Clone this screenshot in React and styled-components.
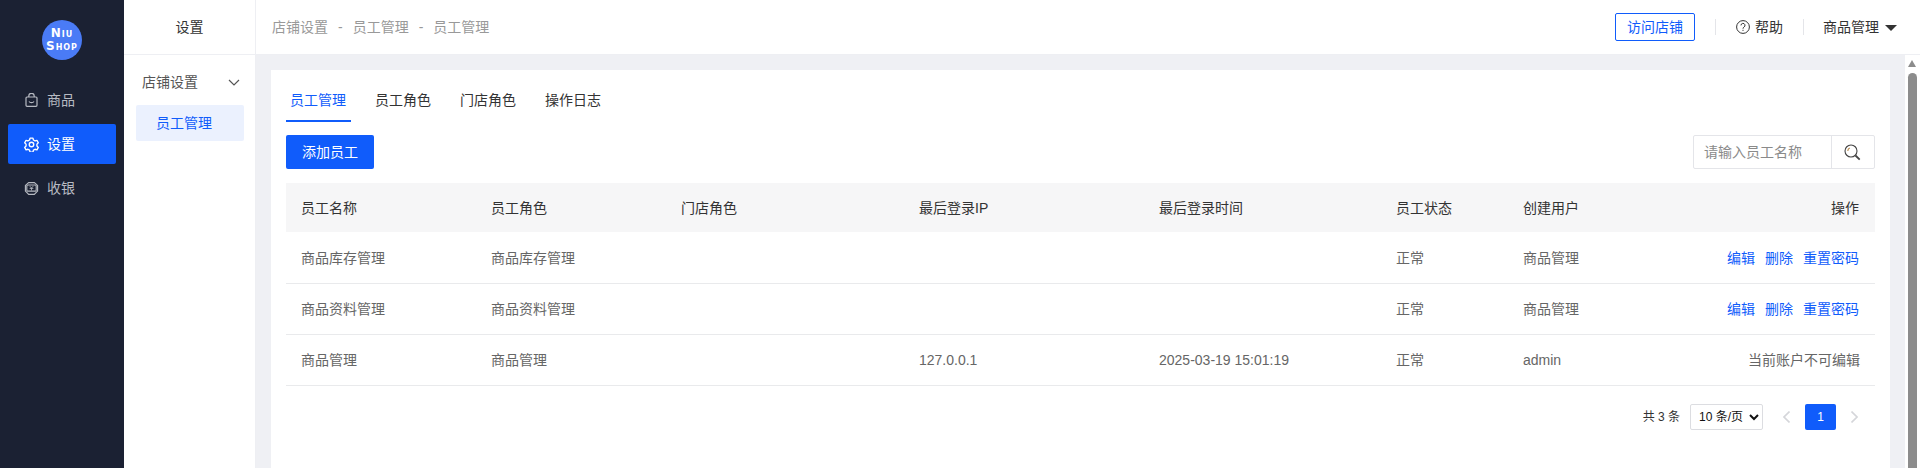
import React from "react";
import styled, { createGlobalStyle } from "styled-components";

const GlobalStyle = createGlobalStyle`
  html, body, #root { margin: 0; padding: 0; height: 100%; overflow: hidden; }
  body {
    font-family: "Liberation Sans", "Noto Sans CJK SC", sans-serif;
    font-size: 14px;
    line-height: 1.5;
    color: #333;
    background: #fff;
  }
  * { box-sizing: border-box; }
`;

const primary = "#105cfb";

const Page = styled.div`
  display: flex;
  height: 100vh;
`;

const Sidebar = styled.aside`
  width: 124px;
  flex: none;
  background: #1b2133;
  padding: 20px 8px 0;
`;

const Logo = styled.div`
  width: 40px;
  height: 40px;
  margin: 0 auto 20px;
  border-radius: 50%;
  background: #4a7bf6;
  color: #fff;
  font-family: "DejaVu Sans", sans-serif;
  font-variant: small-caps;
  font-weight: 700;
  font-size: 12px;
  line-height: 13px;
  letter-spacing: 1px;
  display: flex;
  flex-direction: column;
  align-items: center;
  justify-content: center;
`;

const SideItem = styled.div`
  height: 40px;
  margin-bottom: 4px;
  padding-left: 16px;
  border-radius: 2px;
  display: flex;
  align-items: center;
  gap: 8px;
  color: ${(p) => (p.$active ? "#fff" : "#b7bac2")};
  background: ${(p) => (p.$active ? primary : "transparent")};
`;

const IconSlot = styled.span`
  width: 15px;
  display: flex;
  justify-content: center;
`;

const SubMenu = styled.nav`
  width: 132px;
  flex: none;
  border-right: 1px solid #eeeff3;
  display: flex;
  flex-direction: column;
`;

const SubTitle = styled.div`
  height: 55px;
  border-bottom: 1px solid #eeeff3;
  display: flex;
  align-items: center;
  justify-content: center;
  color: #333;
`;

const SubGroup = styled.div`
  height: 50px;
  padding: 5px 15px 0 18px;
  display: flex;
  align-items: center;
  justify-content: space-between;
  color: #555;
`;

const SubItem = styled.div`
  height: 36px;
  margin: 0 11px 0 12px;
  padding-left: 20px;
  border-radius: 2px;
  display: flex;
  align-items: center;
  color: ${primary};
  background: #ebf1fe;
`;

const Right = styled.div`
  flex: 1;
  min-width: 0;
  display: flex;
  flex-direction: column;
`;

const Header = styled.header`
  height: 55px;
  flex: none;
  padding-left: 16px;
  padding-right: 23px;
  border-bottom: 1px solid #eeeff3;
  display: flex;
  align-items: center;
  justify-content: space-between;
`;

const Crumbs = styled.div`
  display: flex;
  gap: 10px;
  color: #999;
`;

const HeaderTools = styled.div`
  display: flex;
  align-items: center;
`;

const VisitButton = styled.button`
  width: 80px;
  height: 28px;
  padding: 0;
  margin-right: 20px;
  font: inherit;
  color: ${primary};
  background: #fff;
  border: 1px solid ${primary};
  border-radius: 2px;
`;

const ToolDivider = styled.span`
  width: 1px;
  height: 16px;
  background: #e4e5e9;
`;

const HelpLink = styled.div`
  padding: 0 20px;
  display: flex;
  align-items: center;
  gap: 5px;
  color: #333;
`;

const UserMenu = styled.div`
  padding-left: 19px;
  display: flex;
  align-items: center;
  gap: 6px;
  color: #333;
`;

const Caret = styled.span`
  width: 0;
  height: 0;
  border-left: 6px solid transparent;
  border-right: 6px solid transparent;
  border-top: 6px solid #333;
  margin-top: 2px;
`;

const Body = styled.div`
  flex: 1;
  min-height: 0;
  display: flex;
`;

const Main = styled.main`
  flex: 1;
  min-width: 0;
  overflow: hidden;
  background: #eff0f4;
  padding: 15px 15px 0;
`;

// window scrollbar, the browser hides the real one in the shot
const ScrollRail = styled.div`
  width: 15px;
  flex: none;
  padding: 5px 3px 0;
  background: #fff;
  display: flex;
  flex-direction: column;
`;

const ScrollArrow = styled.span`
  width: 0;
  height: 0;
  border-left: 4.5px solid transparent;
  border-right: 4.5px solid transparent;
  border-bottom: 7px solid #8c8c8c;
`;

const ScrollThumb = styled.span`
  flex: 1;
  margin-top: 6px;
  background: #8c8c8c;
  border-radius: 5px 5px 0 0;
`;

const Card = styled.section`
  background: #fff;
  height: 100%;
  padding: 15px;
`;

const Tabs = styled.div`
  display: flex;
  gap: 20px;
  height: 37px;
`;

const Tab = styled.div`
  height: 37px;
  padding: 0 5px 0 4px;
  line-height: 31px;
  color: ${(p) => (p.$active ? primary : "#333")};
  border-bottom: 2px solid ${(p) => (p.$active ? primary : "transparent")};
`;

const Toolbar = styled.div`
  margin-top: 13px;
  display: flex;
  align-items: center;
  justify-content: space-between;
`;

const AddButton = styled.button`
  width: 88px;
  height: 34px;
  padding: 0;
  font: inherit;
  color: #fff;
  background: ${primary};
  border: 0;
  border-radius: 2px;
`;

const SearchBox = styled.div`
  width: 182px;
  height: 34px;
  display: flex;
  border: 1px solid #e4e5e9;
  border-radius: 2px;
`;

const SearchText = styled.div`
  flex: 1;
  padding-left: 10px;
  line-height: 32px;
  color: #8a8a8a;
  border-right: 1px solid #e4e5e9;
`;

const SearchIcon = styled.div`
  width: 42px;
  padding-right: 2px;
  display: flex;
  align-items: center;
  justify-content: center;
`;

const Table = styled.table`
  width: 100%;
  margin-top: 14px;
  border-collapse: collapse;
  table-layout: fixed;
`;

const Th = styled.th`
  height: 49px;
  padding: 1px ${(p) => (p.$right ? "16px" : "15px")} 0 15px;
  font-weight: 400;
  text-align: ${(p) => (p.$right ? "right" : "left")};
  color: #333;
  background: #f6f6f7;
`;

const Td = styled.td`
  height: 51px;
  padding: 2px 15px 0;
  text-align: ${(p) => (p.$right ? "right" : "left")};
  color: #666;
  border-bottom: 1px solid #e9eaec;
`;

const ActionLink = styled.a`
  margin-left: 10px;
  color: ${primary};

  &:last-child {
    margin-right: 1px;
  }
`;

const Pagination = styled.div`
  margin-top: 18px;
  padding-right: 17px;
  display: flex;
  align-items: center;
  justify-content: flex-end;
  font-size: 12px;
  color: #333;
`;

const PageSelect = styled.select`
  width: 73px;
  height: 26px;
  margin: 0 20px 0 10px;
  padding: 0 0 0 4px;
  font: inherit;
  color: #111;
  background: #fff;
  border: 1px solid #dcdde1;
  border-radius: 2px;
`;

const PageArrow = styled.span`
  display: flex;
`;

const PageNumber = styled.span`
  width: 31px;
  height: 26px;
  margin: 0 15px;
  display: flex;
  align-items: center;
  justify-content: center;
  color: #fff;
  background: ${primary};
  border-radius: 2px;
`;

const PageTotal = styled.span``;

const cols = [190, 190, 238, 240, 237, 127, 150, 217];

const rows = [
  { name: "商品库存管理", role: "商品库存管理", ip: "", time: "", user: "商品管理", edit: true },
  { name: "商品资料管理", role: "商品资料管理", ip: "", time: "", user: "商品管理", edit: true },
  { name: "商品管理", role: "商品管理", ip: "127.0.0.1", time: "2025-03-19 15:01:19", user: "admin", edit: false },
];

function BagIcon() {
  return (
    <svg width="13" height="14" viewBox="0 0 13 14" fill="none" stroke="currentColor" strokeWidth="1.2">
      <rect x="1" y="4" width="11" height="9.300" rx="1" />
      <path d="M3.800 4V3a2.700 2.700 0 0 1 5.400 0v1" />
      <path d="M4 8.500c1 1.500 4 1.500 5 0" />
    </svg>
  );
}

function GearIcon() {
  return (
    <svg width="15" height="15" viewBox="0 0 24 24" fill="none" stroke="currentColor" strokeWidth="2.200" strokeLinejoin="round">
      <path d="M9.700 1.800h4.600l.8 3 2.600 1.500 3-.9 2.200 3.800-2.200 2.200v3.100l2.200 2.200-2.200 3.800-3-.9-2.600 1.500-.8 3H9.700l-.8-3-2.600-1.500-3 .9-2.200-3.800 2.200-2.200v-3.100L1.100 9.200l2.200-3.800 3 .9 2.600-1.500z" />
      <circle cx="12" cy="12" r="3.600" />
    </svg>
  );
}

function CashIcon() {
  return (
    <svg width="16" height="15" viewBox="0 0 16 15" fill="none" stroke="currentColor" strokeWidth="1.200">
      <path d="M5 1.200h6l3.500 3v6L11 13.800H5l-3.500-3.600v-6z" />
      <rect x="3" y="3.800" width="10" height="6.500" rx="1" fill="#1b2133" />
      <path d="M6.200 5l1.800 2 1.800-2M6 7.400h4M8 7v2.600" strokeWidth="0.900" />
    </svg>
  );
}

function Chevron({ dir = "down", color = "#555" }) {
  if (dir === "down") {
    return (
      <svg width="12" height="7" viewBox="0 0 12 7" fill="none" stroke={color} strokeWidth="1.200">
        <path d="M1 1l5 5 5-5" />
      </svg>
    );
  }
  return (
    <svg width="7" height="12" viewBox="0 0 7 12" fill="none" stroke={color} strokeWidth="1.600">
      <path d={dir === "left" ? "M6.500 .5L1 6l5.500 5.500" : "M.5 .5L6 6l-5.500 5.500"} />
    </svg>
  );
}

function HelpIcon() {
  return (
    <svg width="14" height="14" viewBox="0 0 14 14" fill="none" stroke="#333" strokeWidth="1">
      <circle cx="7" cy="7" r="6.400" />
      <path d="M5 5.400a2 2 0 1 1 3 1.700c-.7.4-1 .8-1 1.600" />
      <path d="M7 9.800v1.100" />
    </svg>
  );
}

function LensIcon() {
  return (
    <svg width="17" height="17" viewBox="0 0 17 17" fill="none" stroke="#444" strokeWidth="1.100">
      <circle cx="7" cy="7" r="6" />
      <path d="M3.800 7a3.200 3.200 0 0 1 2-3" stroke="#b98a4a" />
      <path d="M11.500 11.500l4.200 4.200" strokeWidth="1.800" />
    </svg>
  );
}

export default function App() {
  return (
    <Page>
      <GlobalStyle />
      <Sidebar>
        <Logo>
          <span>Niu</span>
          <span>Shop</span>
        </Logo>
        <SideItem><IconSlot><BagIcon /></IconSlot>商品</SideItem>
        <SideItem $active><IconSlot><GearIcon /></IconSlot>设置</SideItem>
        <SideItem><IconSlot><CashIcon /></IconSlot>收银</SideItem>
      </Sidebar>
      <SubMenu>
        <SubTitle>设置</SubTitle>
        <SubGroup>店铺设置<Chevron /></SubGroup>
        <SubItem>员工管理</SubItem>
      </SubMenu>
      <Right>
        <Header>
          <Crumbs>
            <span>店铺设置</span><span>-</span><span>员工管理</span><span>-</span><span>员工管理</span>
          </Crumbs>
          <HeaderTools>
            <VisitButton>访问店铺</VisitButton>
            <ToolDivider />
            <HelpLink><HelpIcon />帮助</HelpLink>
            <ToolDivider />
            <UserMenu>商品管理<Caret /></UserMenu>
          </HeaderTools>
        </Header>
        <Body>
          <Main>
            <Card>
              <Tabs>
                <Tab $active>员工管理</Tab>
                <Tab>员工角色</Tab>
                <Tab>门店角色</Tab>
                <Tab>操作日志</Tab>
              </Tabs>
              <Toolbar>
                <AddButton>添加员工</AddButton>
                <SearchBox>
                  <SearchText>请输入员工名称</SearchText>
                  <SearchIcon><LensIcon /></SearchIcon>
                </SearchBox>
              </Toolbar>
              <Table>
                <colgroup>
                  {cols.map((w, i) => <col key={i} style={{ width: w }} />)}
                </colgroup>
                <thead>
                  <tr>
                    <Th>员工名称</Th>
                    <Th>员工角色</Th>
                    <Th>门店角色</Th>
                    <Th>最后登录IP</Th>
                    <Th>最后登录时间</Th>
                    <Th>员工状态</Th>
                    <Th>创建用户</Th>
                    <Th $right>操作</Th>
                  </tr>
                </thead>
                <tbody>
                  {rows.map((r, i) => (
                    <tr key={i}>
                      <Td>{r.name}</Td>
                      <Td>{r.role}</Td>
                      <Td></Td>
                      <Td>{r.ip}</Td>
                      <Td>{r.time}</Td>
                      <Td>正常</Td>
                      <Td>{r.user}</Td>
                      <Td $right>
                        {r.edit ? (
                          <>
                            <ActionLink>编辑</ActionLink>
                            <ActionLink>删除</ActionLink>
                            <ActionLink>重置密码</ActionLink>
                          </>
                        ) : "当前账户不可编辑"}
                      </Td>
                    </tr>
                  ))}
                </tbody>
              </Table>
              <Pagination>
                <PageTotal>共 3 条</PageTotal>
                <PageSelect defaultValue="10">
                  <option value="10">10 条/页</option>
                </PageSelect>
                <PageArrow><Chevron dir="left" color="#d5d6da" /></PageArrow>
                <PageNumber>1</PageNumber>
                <PageArrow><Chevron dir="right" color="#d5d6da" /></PageArrow>
              </Pagination>
            </Card>
          </Main>
          <ScrollRail>
            <ScrollArrow />
            <ScrollThumb />
          </ScrollRail>
        </Body>
      </Right>
    </Page>
  );
}
